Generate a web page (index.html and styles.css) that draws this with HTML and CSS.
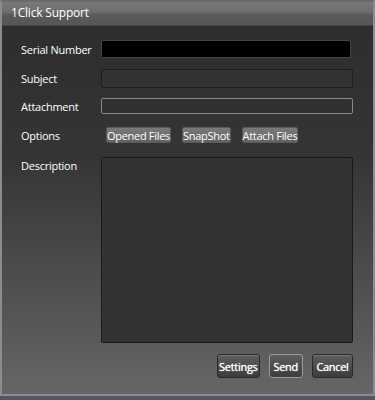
FILE: index.html
```html
<!DOCTYPE html>
<html lang="en">
<head>
    <meta charset="UTF-8">
    <title>1Click Support</title>
    <link rel="stylesheet" href="styles.css">
</head>
<body>
    <div class="window">
        <div class="titlebar">1Click Support</div>
        <div class="content">
            <div class="row row-serial">
                <label>Serial Number</label>
                <input type="text" class="field field-black">
            </div>
            <div class="row row-subject">
                <label>Subject</label>
                <input type="text" class="field">
            </div>
            <div class="row row-attach">
                <label>Attachment</label>
                <input type="text" class="field field-focus">
            </div>
            <div class="row row-options">
                <label>Options</label>
                <div class="options">
                    <button class="opt">Opened Files</button>
                    <button class="opt">SnapShot</button>
                    <button class="opt">Attach Files</button>
                </div>
            </div>
            <div class="row row-desc">
                <label>Description</label>
                <textarea class="field desc"></textarea>
            </div>
            <div class="actions">
                <button class="btn">Settings</button>
                <button class="btn btn-focus">Send</button>
                <button class="btn">Cancel</button>
            </div>
        </div>
    </div>
</body>
</html>
```

FILE: styles.css
```css
body {
    margin: 0;
    background: #5b5560;
    font-family: 'Open Sans', 'Noto Sans', sans-serif;
    font-size: 11px;
    letter-spacing: -0.25px;
    color: #fff;
}
.window {
    width: 371px;
    height: 392px;
    border: 2px solid #8c8c90;
    border-top-color: #6a6a6e;
    display: flex;
    flex-direction: column;
    background: linear-gradient(to bottom, #2c2c2c 0%, #353535 40%, #555 80%, #666 100%);
}
.titlebar {
    height: 23px;
    line-height: 22px;
    padding-left: 9px;
    font-size: 12px;
    letter-spacing: -0.2px;
    background: linear-gradient(to bottom, #7a7a7a 0%, #6c6c6c 45%, #5a5a5a 55%, #565656 100%);
    border-bottom: 1px solid #444;
}
.content {
    padding: 14px 20px 0 19px;
    display: flex;
    flex-direction: column;
}
.row {
    display: flex;
    align-items: center;
}
.row label {
    width: 80px;
    flex: none;
}
.field {
    box-sizing: border-box;
    width: 252px;
    margin: 0;
    background: #333;
    border: 1px solid #1e1e1e;
    border-radius: 2px;
    color: #fff;
    font-family: inherit;
}
.field-black {
    background: #000;
    border-color: #444;
    height: 18px;
    width: 250px;
}
.row-subject {
    margin-top: 11px;
}
.row-subject .field {
    height: 19px;
}
.row-attach {
    margin-top: 10px;
}
.field-focus {
    height: 16px;
    border-color: #8a8a8a;
    background: #303030;
}
.row-options {
    margin-top: 13px;
}
.options {
    display: flex;
    gap: 11px;
    padding-left: 5px;
}
.opt {
    height: 16px;
    padding: 0;
    border: 1px solid #5a5a5a;
    border-radius: 2px;
    background: linear-gradient(to bottom, #7a7a7a, #626262);
    color: #fff;
    font-family: inherit;
    font-size: 11px;
    letter-spacing: -0.3px;
    line-height: 13px;
}
.row-desc {
    margin-top: 14px;
    align-items: flex-start;
}
.row-desc label {
    padding-top: 1px;
}
.desc {
    height: 186px;
    resize: none;
    background: #333;
    border-color: #1a1a1a;
}
.actions {
    margin-top: 11px;
    display: flex;
    justify-content: flex-end;
    gap: 9px;
}
.btn {
    min-width: 41px;
    height: 24px;
    padding: 0 1px;
    border: 1px solid #2a2a2a;
    border-radius: 3px;
    background: linear-gradient(to bottom, #5e5e5e, #3c3c3c);
    box-shadow: inset 0 1px 0 #777;
    color: #fff;
    font-family: inherit;
    font-size: 11px;
    letter-spacing: -0.3px;
    text-shadow: 0 0 1px #fff;
}
.btn-focus {
    min-width: 34px;
    border-color: #9a9a9a;
    box-shadow: none;
    padding: 0 4px;
}
```
